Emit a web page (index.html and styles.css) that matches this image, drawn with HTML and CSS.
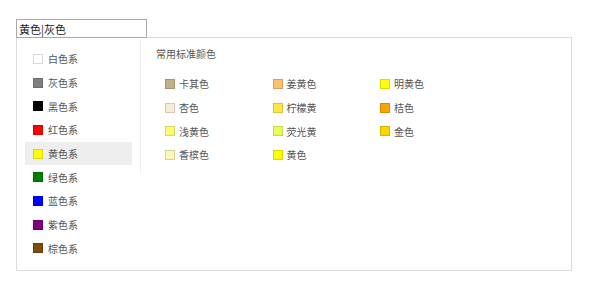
FILE: index.html
```html
<!DOCTYPE html>
<html lang="zh-CN">
<head>
  <meta charset="UTF-8" />
  <title>颜色选择</title>
  <link rel="stylesheet" href="styles.css">
</head>
<body>
  <div class="picker">
    <input type="text" class="color-input" value="黄色|灰色" />

    <div class="panel">
      <ul class="family-list">
        <li class="family"><span class="swatch" style="background:#ffffff"></span>白色系</li>
        <li class="family"><span class="swatch" style="background:#808080"></span>灰色系</li>
        <li class="family"><span class="swatch" style="background:#000000"></span>黑色系</li>
        <li class="family"><span class="swatch" style="background:#ff0000"></span>红色系</li>
        <li class="family active"><span class="swatch" style="background:#ffff00"></span>黄色系</li>
        <li class="family"><span class="swatch" style="background:#008000"></span>绿色系</li>
        <li class="family"><span class="swatch" style="background:#0000ff"></span>蓝色系</li>
        <li class="family"><span class="swatch" style="background:#800080"></span>紫色系</li>
        <li class="family"><span class="swatch" style="background:#7f4b0a"></span>棕色系</li>
      </ul>

      <div class="std-colors">
        <p class="std-title">常用标准颜色</p>
        <div class="color-grid">
          <span class="color-item"><span class="swatch" style="background:#c2b08d"></span>卡其色</span>
          <span class="color-item"><span class="swatch" style="background:#fcc06e"></span>姜黄色</span>
          <span class="color-item"><span class="swatch" style="background:#ffff00"></span>明黄色</span>
          <span class="color-item"><span class="swatch" style="background:#f6ecd6"></span>杏色</span>
          <span class="color-item"><span class="swatch" style="background:#ffe646"></span>柠檬黄</span>
          <span class="color-item"><span class="swatch" style="background:#fba300"></span>桔色</span>
          <span class="color-item"><span class="swatch" style="background:#fdfc71"></span>浅黄色</span>
          <span class="color-item"><span class="swatch" style="background:#ebfc57"></span>荧光黄</span>
          <span class="color-item"><span class="swatch" style="background:#fcd400"></span>金色</span>
          <span class="color-item"><span class="swatch" style="background:#fdf7b4"></span>香槟色</span>
          <span class="color-item"><span class="swatch" style="background:#fefe00"></span>黄色</span>
        </div>
      </div>
    </div>
  </div>
</body>
</html>
```

FILE: styles.css
```css
body {
  margin: 0;
  background: #fff;
  font-family: "Noto Sans CJK SC", "Noto Sans", sans-serif;
  color: #555;
}

.picker {
  padding: 19px 0 0 16px;
  width: 556px;
}

.color-input {
  position: relative;
  display: block;
  box-sizing: border-box;
  width: 131px;
  height: 19px;
  margin: 0;
  padding: 0 2px;
  border: 1px solid #a9a9a9;
  font-family: inherit;
  font-size: 11px;
  color: #222;
  outline: none;
  z-index: 1;
}

.panel {
  display: flex;
  align-items: flex-start;
  box-sizing: border-box;
  height: 234px;
  margin-top: -1px;
  border: 1px solid #dcdcdc;
}

.family-list {
  list-style: none;
  margin: 0;
  padding: 9px 8px 9px 8px;
  width: 107px;
}

.family {
  display: flex;
  align-items: center;
  height: 23.7px;
  padding-left: 8px;
  font-size: 10px;
}

.family.active {
  background: #eeeeee;
}

.swatch {
  display: inline-block;
  box-sizing: border-box;
  width: 10px;
  height: 10px;
  margin-right: 5px;
  border: 1px solid rgba(0, 0, 0, 0.15);
}

.std-colors {
  margin-left: 0;
  margin-top: 2px;
  padding: 8px 0 6px 15px;
  border-left: 1px solid #eeeeee;
}

.std-title {
  margin: 0 0 12px;
  font-size: 10px;
  line-height: 12px;
}

.color-grid {
  display: grid;
  grid-template-columns: repeat(3, 107.5px);
  grid-auto-rows: 23.7px;
  padding-left: 9px;
}

.color-item {
  display: flex;
  align-items: center;
  font-size: 10px;
}

.color-item .swatch {
  margin-right: 4px;
}
```
